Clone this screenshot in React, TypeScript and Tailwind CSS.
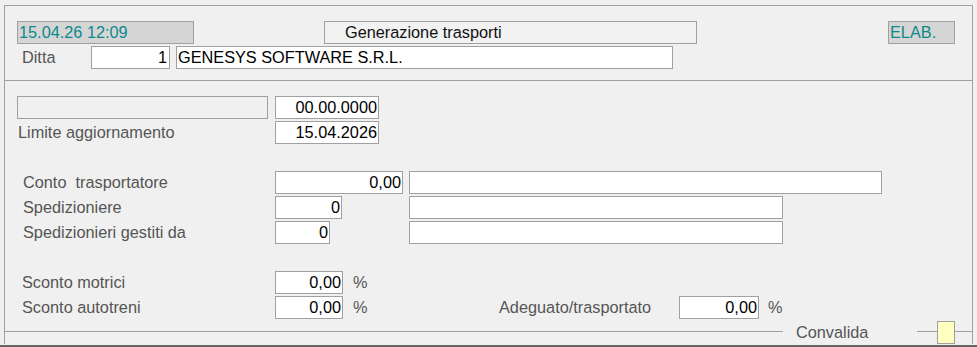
const Campo = ({ w, valore = "", className = "" }: { w: string; valore?: string; className?: string }) => (
  <div className={`${w} h-[23px] shrink-0 bg-white border border-[#a0a0a0] flex items-center justify-end pr-[1px] pb-[2px] text-black ${className}`}>
    {valore}
  </div>
);

const Etichetta = ({ w, ml, testo }: { w: string; ml: string; testo: string }) => (
  <div className={`${w} ${ml} shrink-0 mb-[2px] text-[#555555] whitespace-pre`}>{testo}</div>
);

const App = () => {
  return (
    <div className="w-[977px] h-[347px] overflow-hidden bg-[#f0f0f0] pt-[5px] font-['Liberation_Sans',Arial,sans-serif] text-[16.3px] leading-[18px]">
      {/* Cornice */}
      <div className="ml-[4px] w-[969px] border-l border-r border-t border-[#a0a0a0]">
        {/* Testata */}
        <div className="pt-[15px] pb-[11px] border-b border-[#a0a0a0]">
          <div className="flex h-[23px]">
            <div className="ml-[12px] w-[177px] h-[23px] bg-[#d5d5d5] border border-[#a0a0a0] flex items-center pl-[1px] pb-[2px] text-[#0a8a8c]">
              15.04.26 12:09
            </div>
            <div className="ml-[130px] w-[373px] h-[23px] bg-[#f2f2f2] border border-[#a0a0a0] flex items-center pl-[20px] pb-[2px] text-[#111111]">
              Generazione trasporti
            </div>
            <div className="ml-[191px] w-[67px] h-[23px] bg-[#d5d5d5] border border-[#a0a0a0] flex items-center pl-[1px] pb-[2px] text-[#0a8a8c]">
              ELAB.
            </div>
          </div>
          <div className="flex items-center h-[23px] mt-[2px]">
            <Etichetta w="w-[69px]" ml="ml-[17px]" testo="Ditta" />
            <Campo w="w-[79px]" valore="1" className="pr-[2px]" />
            <div className="ml-[6px] w-[497px] h-[23px] bg-white border border-[#a0a0a0] flex items-center pl-[1px] pb-[2px] text-black">
              GENESYS SOFTWARE S.R.L.
            </div>
          </div>
        </div>

        {/* Corpo */}
        <div className="pt-[15px]">
          <div className="flex items-center h-[23px]">
            <div className="ml-[12px] w-[251px] h-[23px] bg-[#f0f0f0] border border-[#a0a0a0]"></div>
            <Campo w="w-[104px]" valore="00.00.0000" className="ml-[7px]" />
          </div>
          <div className="flex items-center h-[23px] mt-[2px]">
            <Etichetta w="w-[257px]" ml="ml-[13px]" testo="Limite aggiornamento" />
            <Campo w="w-[104px]" valore="15.04.2026" />
          </div>

          <div className="flex items-center h-[23px] mt-[27px]">
            <Etichetta w="w-[252px]" ml="ml-[18px]" testo="Conto  trasportatore" />
            <Campo w="w-[128px]" valore="0,00" />
            <Campo w="w-[473px]" className="ml-[6px]" />
          </div>
          <div className="flex items-center h-[23px] mt-[2px]">
            <Etichetta w="w-[252px]" ml="ml-[18px]" testo="Spedizioniere" />
            <Campo w="w-[67px]" valore="0" />
            <Campo w="w-[374px]" className="ml-[67px]" />
          </div>
          <div className="flex items-center h-[23px] mt-[2px]">
            <Etichetta w="w-[252px]" ml="ml-[18px]" testo="Spedizionieri gestiti da" />
            <Campo w="w-[55px]" valore="0" />
            <Campo w="w-[374px]" className="ml-[79px]" />
          </div>

          <div className="flex items-center h-[23px] mt-[27px]">
            <Etichetta w="w-[253px]" ml="ml-[17px]" testo="Sconto motrici" />
            <Campo w="w-[68px]" valore="0,00" />
            <span className="ml-[10px] mb-[2px] text-[#555555]">%</span>
          </div>
          <div className="flex items-center h-[23px] mt-[2px]">
            <Etichetta w="w-[253px]" ml="ml-[17px]" testo="Sconto autotreni" />
            <Campo w="w-[68px]" valore="0,00" />
            <span className="ml-[10px] mb-[2px] w-[146px] shrink-0 text-[#555555]">%</span>
            <Etichetta w="w-[180px]" ml="ml-0" testo="Adeguato/trasportato" />
            <Campo w="w-[80px]" valore="0,00" />
            <span className="ml-[9px] mb-[2px] text-[#555555]">%</span>
          </div>

          {/* Convalida */}
          <div className="flex h-[23px] mt-[2px]">
            <div className="w-[778px] h-px mt-[10px] bg-[#a0a0a0] shrink-0"></div>
            <div className="ml-[13px] w-[121px] shrink-0 flex items-center pb-[2px] text-[#555555]">Convalida</div>
            <div className="w-[20px] h-px mt-[10px] bg-[#a0a0a0] shrink-0"></div>
            <div className="w-[18px] h-[23px] shrink-0 bg-[#ffffc0] border border-[#a0a0a0]"></div>
            <div className="flex-1 h-px mt-[10px] bg-[#a0a0a0]"></div>
          </div>
        </div>
      </div>
      <div className="mt-[1px] h-[2px] bg-[#666666]"></div>
    </div>
  );
};

export default App;
